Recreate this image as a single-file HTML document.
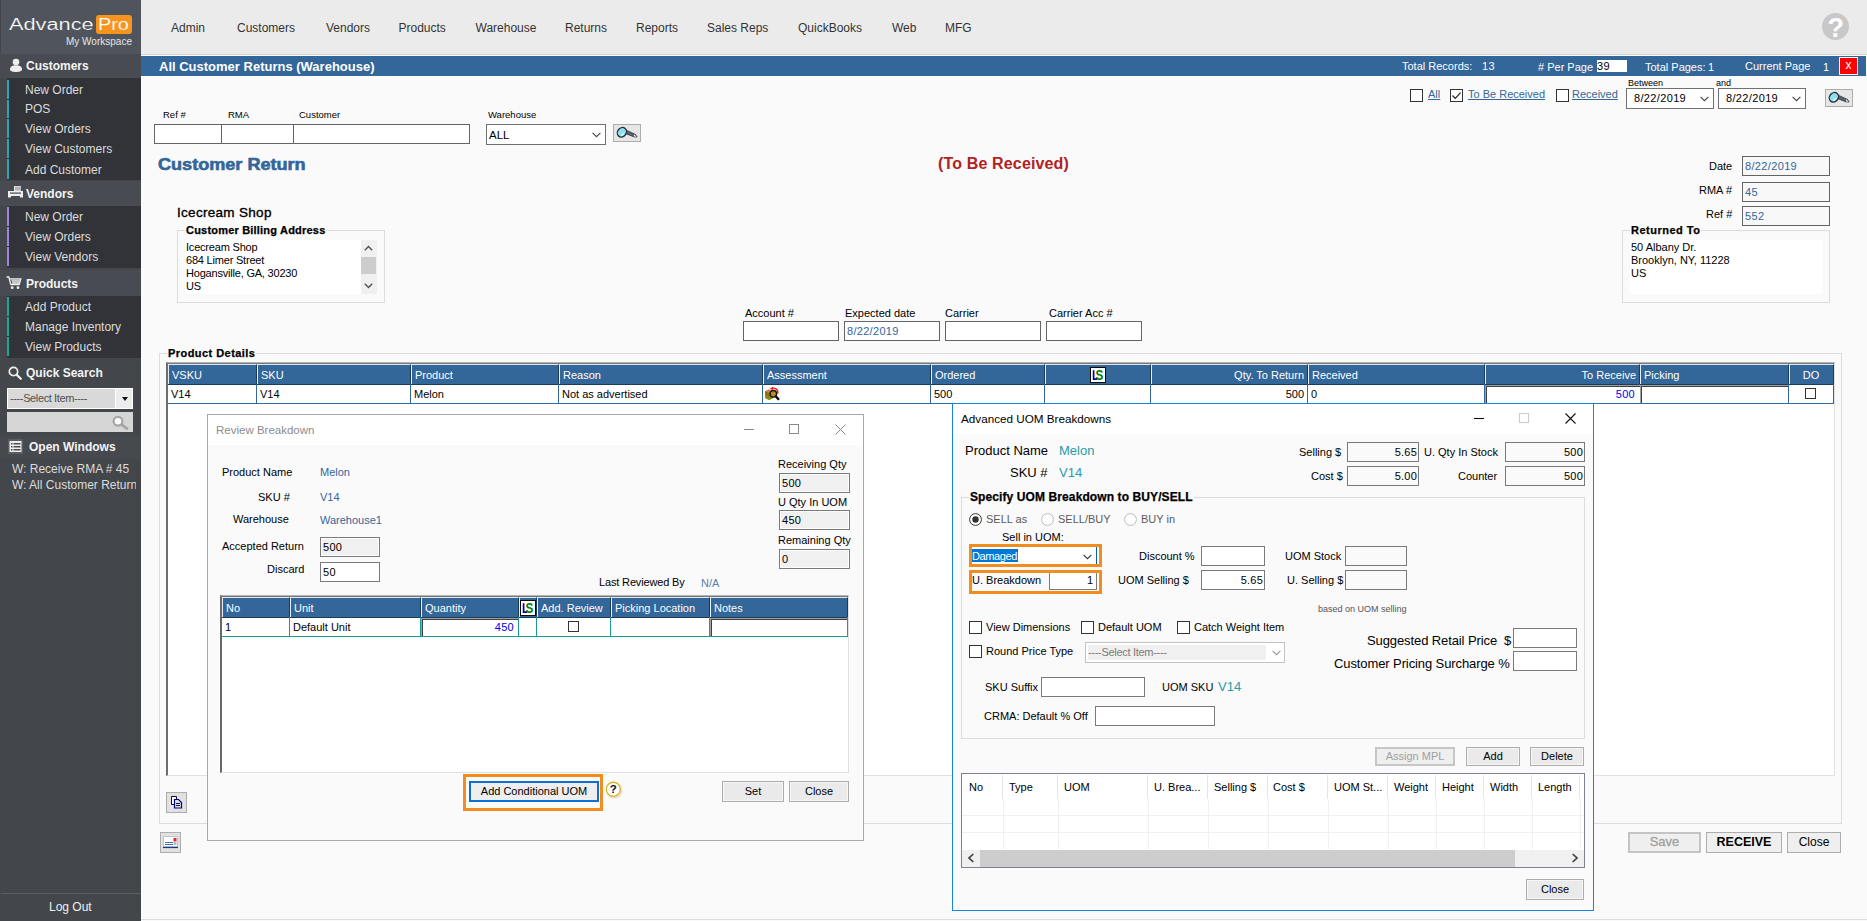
<!DOCTYPE html>
<html>
<head>
<meta charset="utf-8">
<title>AdvancePro</title>
<style>
*{box-sizing:border-box;margin:0;padding:0}
html,body{width:1867px;height:921px;overflow:hidden;background:#fafafa;font-family:"Liberation Sans",sans-serif;font-size:11px;color:#000}
.a{position:absolute;white-space:nowrap}
.t{position:absolute;white-space:nowrap;line-height:14px;height:14px}
.b{font-weight:bold}
.r{text-align:right}
.blue{color:#336699}
.teal{color:#2a9aa6}
/* sidebar */
#sb{position:absolute;left:0;top:0;width:141px;height:921px;background:#43464b}
#sb .logo{position:absolute;left:1px;top:0;width:140px;height:54px;background:#50555d}
#sb .hd{position:absolute;left:0;width:141px;background:#484b51;color:#f4f4f4;font-weight:bold;font-size:12px}
#sb .hd span{position:absolute;left:26px;line-height:14px}
#sb .grp{position:absolute;left:7px;width:134px;background:#313338}
#sb .it{position:absolute;left:0;width:134px;height:19px;color:#dcdcdc;font-size:12px;line-height:14px}
#sb .it i{position:absolute;left:0;top:0;width:2px;height:100%}
#sb .it span{position:absolute;left:18px;top:3px}
/* top */
#top{position:absolute;left:141px;top:0;width:1726px;height:55px;background:#ebebeb;border-bottom:1px solid #d4d4d4}
#top span{position:absolute;top:21px;font-size:12px;line-height:14px;color:#333}
#bar{position:absolute;left:141px;top:56px;width:1725px;height:20px;background:#336699;color:#fff}
#bar span{position:absolute;line-height:14px;font-size:11px}
/* inputs */
.in{position:absolute;background:#fff;border:1px solid #7a7a7a;font-size:11px;line-height:14px;white-space:nowrap;overflow:hidden}
.in.g{background:#f0f0f0}
.btn{position:absolute;background:#e1e1e1;border:1px solid #adadad;font-size:12px;text-align:center;white-space:nowrap}
.cb{position:absolute;width:13px;height:13px;background:#fff;border:1px solid #333}
.gb{position:absolute;border:1px solid #dcdcdc}
.gb>b{position:absolute;top:-8px;left:7px;background:#fafafa;padding:0 1px;font-size:11px;line-height:14px;white-space:nowrap;-webkit-text-stroke:.25px #000}
</style>
</head>
<body>
<!-- SIDEBAR -->
<div id="sb">
  <div class="logo">
    <span class="a" style="left:8px;top:15px;font-size:16px;line-height:20px;color:#fff;transform:scaleX(1.36);transform-origin:0 50%;-webkit-text-stroke:.2px #50555d">Advance</span>
    <div class="a" style="left:95px;top:15px;width:36px;height:19px;background:#f7941e;border-radius:3px"></div>
    <span class="a" style="left:97px;top:15px;font-size:16px;line-height:20px;color:#fff;transform:scaleX(1.24);transform-origin:0 50%;-webkit-text-stroke:.15px #f7941e">Pro</span>
    <span class="a" style="left:65px;top:36px;font-size:10px;line-height:12px;color:#e4e4e4">My Workspace</span>
  </div>
  <div class="hd" style="top:54px;height:24px"><span style="top:5px">Customers</span></div>
  <div class="hd" style="top:181px;height:25px"><span style="top:6px">Vendors</span></div>
  <div class="hd" style="top:270px;height:26px"><span style="top:7px">Products</span></div>
  <div class="hd" style="top:359px;height:27px;background:#43464b"><span style="top:7px">Quick Search</span></div>
  <div class="hd" style="top:436px;height:22px;background:#46494e"><span style="top:4px;left:29px">Open Windows</span></div>

  <!-- icons -->
  <svg class="a" style="left:9px;top:58px" width="14" height="15" viewBox="0 0 14 15"><circle cx="7" cy="4" r="3.3" fill="#eee"/><path d="M1 11.5C1 8.5 3.5 7.3 7 7.3s6 1.2 6 4.2c0 1.6-2.6 2.5-6 2.5s-6-.9-6-2.5z" fill="#eee"/></svg>
  <svg class="a" style="left:8px;top:186px" width="15" height="12" viewBox="0 0 15 12"><path d="M0 5h15v6.5h-3V10H3v1.5H0z M6 0h7v5H6z" fill="#eee"/><path d="M8 .5v4M10 .5v4M12 .5v4" stroke="#484b51" stroke-width=".7"/><rect x="2" y="6.5" width="11" height="1.2" fill="#484b51"/></svg>
  <svg class="a" style="left:6px;top:276px" width="17" height="14" viewBox="0 0 17 14"><path d="M0.5 1h2.3l2 7.5h8.4l1.6-5.7H4" fill="none" stroke="#eee" stroke-width="1.3"/><path d="M5.2 3.6h9l-1.3 4.6H6.4z" fill="#eee" opacity=".75"/><circle cx="6.2" cy="11.7" r="1.4" fill="#eee"/><circle cx="12" cy="11.7" r="1.4" fill="#eee"/></svg>
  <svg class="a" style="left:8px;top:366px" width="14" height="14" viewBox="0 0 14 14"><circle cx="5.5" cy="5.5" r="4.2" fill="none" stroke="#eee" stroke-width="1.7"/><path d="M8.6 8.6l4.2 4.2" stroke="#eee" stroke-width="2.2" stroke-linecap="round"/></svg>
  <svg class="a" style="left:8px;top:439px" width="15" height="15" viewBox="0 0 15 15"><rect x="0" y="0" width="15" height="15" fill="#5a5d63"/><rect x="1.5" y="2" width="12" height="11" fill="#eee"/><g fill="#484b51"><rect x="3" y="4" width="1.5" height="1.5"/><rect x="5.5" y="4" width="7" height="1.5"/><rect x="3" y="7" width="1.5" height="1.5"/><rect x="5.5" y="7" width="7" height="1.5"/><rect x="3" y="10" width="1.5" height="1.5"/><rect x="5.5" y="10" width="7" height="1.5"/></g></svg>
  <div class="grp" style="top:78px;height:102px">
    <div class="it" style="top:2px;height:19px"><i style="background:#2ba6b4"></i><span style="top:3px">New Order</span></div>
    <div class="it" style="top:22px;height:18px"><i style="background:#2ba6b4"></i><span style="top:2px">POS</span></div>
    <div class="it" style="top:41px;height:19px"><i style="background:#2ba6b4"></i><span style="top:3px">View Orders</span></div>
    <div class="it" style="top:61px;height:19px"><i style="background:#2ba6b4"></i><span style="top:3px">View Customers</span></div>
    <div class="it" style="top:81px;height:20px"><i style="background:#2ba6b4"></i><span style="top:4px">Add Customer</span></div>
  </div>
  <div class="grp" style="top:206px;height:62px">
    <div class="it" style="top:1px;height:19px"><i style="background:#9b84e0"></i><span style="top:3px">New Order</span></div>
    <div class="it" style="top:21px;height:19px"><i style="background:#9b84e0"></i><span style="top:3px">View Orders</span></div>
    <div class="it" style="top:41px;height:19px"><i style="background:#9b84e0"></i><span style="top:3px">View Vendors</span></div>
  </div>
  <div class="grp" style="top:296px;height:62px">
    <div class="it" style="top:1px;height:19px"><i style="background:#1fa594"></i><span style="top:3px">Add Product</span></div>
    <div class="it" style="top:21px;height:19px"><i style="background:#1fa594"></i><span style="top:3px">Manage Inventory</span></div>
    <div class="it" style="top:41px;height:19px"><i style="background:#1fa594"></i><span style="top:3px">View Products</span></div>
  </div>
  <!-- quick search -->
  <div class="a" style="left:7px;top:388px;width:126px;height:21px;background:#fff"></div><div class="a" style="left:116px;top:389px;width:16px;height:19px;background:#ececec"></div>
  <div class="a" style="left:8px;top:389px;width:107px;height:19px;background:#d9d9d9"></div>
  <span class="a" style="left:10px;top:391px;font-size:11px;line-height:14px;color:#505050;letter-spacing:-.38px">----Select Item----</span>
  <div class="a" style="left:122px;top:397px;border:3px solid transparent;border-top:4px solid #111;border-bottom:0"></div>
  <div class="a" style="left:7px;top:412px;width:126px;height:20px;background:#d6d6d6"></div>
  <svg class="a" style="left:112px;top:415px" width="17" height="15" viewBox="0 0 17 15"><circle cx="6" cy="6.3" r="4.4" fill="#fafafa" stroke="#a6a6a6" stroke-width="2.2"/><path d="M10 9.8l5 3.8" stroke="#a6a6a6" stroke-width="2.8" stroke-linecap="round"/></svg>
  <span class="a" style="left:12px;top:462px;font-size:12px;line-height:14px;color:#dcdcdc">W: Receive RMA # 45</span>
  <span class="a" style="left:12px;top:478px;font-size:12px;line-height:14px;color:#dcdcdc;width:124px;overflow:hidden">W: All Customer Returns</span>
  <div class="a" style="left:1px;top:893px;width:140px;height:1px;background:#5c5f64"></div>
  <span class="a" style="left:49px;top:900px;font-size:12px;line-height:14px;color:#f0f0f0">Log Out</span>
</div>
<!-- TOP MENU -->
<div id="top">
  <span style="left:30px">Admin</span><span style="left:96px">Customers</span><span style="left:185px">Vendors</span><span style="left:257.5px">Products</span><span style="left:334.5px">Warehouse</span><span style="left:424px">Returns</span><span style="left:495px">Reports</span><span style="left:566px">Sales Reps</span><span style="left:657px">QuickBooks</span><span style="left:751px">Web</span><span style="left:804px">MFG</span>
</div>
<svg class="a" style="left:1822px;top:13px" width="28" height="28" viewBox="0 0 28 28"><circle cx="13.5" cy="13.5" r="13.5" fill="#c8c8c8"/><text x="13.7" y="23.5" text-anchor="middle" font-family="Liberation Sans" font-weight="bold" font-size="27" fill="#fff">?</text></svg>
<div id="bar">
  <span class="b" style="left:18px;top:4px;font-size:13px">All Customer Returns (Warehouse)</span>
  <span style="left:1261px;top:3px;font-size:11px">Total Records:</span>
  <span style="left:1341px;top:3px;font-size:11px;letter-spacing:.4px">13</span>
  <span style="left:1397px;top:4px;font-size:11px"># Per Page</span>
  <div class="a" style="left:1456px;top:4px;width:30px;height:12px;background:#fff"></div>
  <span style="left:1456px;top:3px;font-size:11px;color:#000;letter-spacing:.4px">39</span>
  <span style="left:1504px;top:4px;font-size:11px">Total Pages:</span>
  <span style="left:1567px;top:4px;font-size:11px">1</span>
  <span style="left:1604px;top:3px;font-size:11px">Current Page</span>
  <span style="left:1682px;top:4px;font-size:11px">1</span>
  <div class="a" style="left:1698px;top:1px;width:19px;height:18px;background:#fe0000;border:1px solid #f4f4f4;color:#fff;font-size:12px;line-height:14px;text-align:center">x</div>
</div>

<!-- FILTER ROW -->
<span class="t" style="left:163px;top:108px;font-size:9.5px">Ref #</span>
<span class="t" style="left:228px;top:108px;font-size:9.5px">RMA</span>
<span class="t" style="left:299px;top:108px;font-size:9.5px">Customer</span>
<span class="t" style="left:488px;top:108px;font-size:9.5px">Warehouse</span>
<div class="in" style="left:154px;top:124px;width:68px;height:20px;border-color:#646464"></div>
<div class="in" style="left:221px;top:124px;width:73px;height:20px;border-color:#646464"></div>
<div class="in" style="left:293px;top:124px;width:177px;height:20px;border-color:#646464"></div>
<div class="in" style="left:486px;top:124px;width:120px;height:21px;border-color:#707070;padding:3px 0 0 2px;font-size:11.5px">ALL</div>
<svg class="a" style="left:592px;top:132px" width="9" height="6" viewBox="0 0 9 6"><path d="M.6.8l3.9 3.9L8.4.8" fill="none" stroke="#444" stroke-width="1.1"/></svg><svg class="a" style="left:613px;top:124px" width="28" height="18" viewBox="0 0 28 18"><rect x=".5" y=".5" width="27" height="17" fill="#e6e6e6" stroke="#adadad"/><path d="M13.2 6.2l9.3 4.2 1.6 2.6-3.2-.2-8.6-3.4z" fill="#5c646c" stroke="#2a3038" stroke-width=".8"/><path d="M21 10.2l2.6 2.6-2.4-.3z" fill="#fff"/><ellipse cx="8.9" cy="8.3" rx="4.3" ry="5" transform="rotate(40 8.9 8.3)" fill="#8edff0" stroke="#2a3038" stroke-width="1.4"/><path d="M8.2 11.6l3-2.2" stroke="#f4ffff" stroke-width="1.3"/></svg>
<div class="cb" style="left:1410px;top:89px"></div>
<span class="t" style="left:1428px;top:87px;font-size:11px;color:#336699;text-decoration:underline">All</span>
<div class="cb" style="left:1450px;top:89px"></div>
<svg class="a" style="left:1451px;top:90px" width="11" height="11" viewBox="0 0 11 11"><path d="M1.5 5.5l2.8 2.8L9.5 2.6" fill="none" stroke="#222" stroke-width="1.2"/></svg>
<span class="t" style="left:1468px;top:87px;font-size:11px;color:#336699;text-decoration:underline">To Be Received</span>
<div class="cb" style="left:1556px;top:89px"></div>
<span class="t" style="left:1572px;top:87px;font-size:11px;color:#336699;text-decoration:underline">Received</span>
<span class="t" style="left:1628px;top:76px;font-size:9px">Between</span>
<span class="t" style="left:1716px;top:76px;font-size:9px">and</span>
<div class="in" style="left:1626px;top:88px;width:88px;height:21px;border-color:#707070;padding:2px 0 0 7px;font-size:11px;letter-spacing:.35px">8/22/2019</div>
<div class="in" style="left:1718px;top:88px;width:88px;height:21px;border-color:#707070;padding:2px 0 0 7px;font-size:11px;letter-spacing:.35px">8/22/2019</div>
<svg class="a" style="left:1700px;top:96px" width="9" height="6" viewBox="0 0 9 6"><path d="M.6.8l3.9 3.9L8.4.8" fill="none" stroke="#444" stroke-width="1.1"/></svg><svg class="a" style="left:1792px;top:96px" width="9" height="6" viewBox="0 0 9 6"><path d="M.6.8l3.9 3.9L8.4.8" fill="none" stroke="#444" stroke-width="1.1"/></svg><svg class="a" style="left:1825px;top:89px" width="28" height="18" viewBox="0 0 28 18"><rect x=".5" y=".5" width="27" height="17" fill="#e6e6e6" stroke="#adadad"/><path d="M13.2 6.2l9.3 4.2 1.6 2.6-3.2-.2-8.6-3.4z" fill="#5c646c" stroke="#2a3038" stroke-width=".8"/><path d="M21 10.2l2.6 2.6-2.4-.3z" fill="#fff"/><ellipse cx="8.9" cy="8.3" rx="4.3" ry="5" transform="rotate(40 8.9 8.3)" fill="#8edff0" stroke="#2a3038" stroke-width="1.4"/><path d="M8.2 11.6l3-2.2" stroke="#f4ffff" stroke-width="1.3"/></svg>
<!-- HEADINGS -->
<span class="t b" style="left:158px;top:155px;font-size:16px;line-height:20px;height:20px;color:#336699;transform:scaleX(1.13);transform-origin:0 50%;-webkit-text-stroke:.6px #336699">Customer Return</span>
<span class="t b" style="left:938px;top:154px;font-size:16px;line-height:20px;height:20px;color:#b22222;letter-spacing:.15px">(To Be Received)</span>
<span class="t" style="left:177px;top:206px;font-size:13.5px;-webkit-text-stroke:.35px #000;letter-spacing:.3px">Icecream Shop</span>
<!-- billing -->
<div class="gb" style="left:177px;top:230px;width:208px;height:73px"><b style="letter-spacing:.2px">Customer Billing Address</b></div>
<div class="a" style="left:185px;top:240px;width:192px;height:54px;background:#fff"></div>
<div class="a" style="left:361px;top:240px;width:16px;height:54px;background:#f0f0f0"></div>
<div class="a" style="left:361px;top:257px;width:15px;height:17px;background:#cdcdcd"></div>
<svg class="a" style="left:364px;top:245px" width="9" height="6" viewBox="0 0 9 6"><path d="M.8 5.2l3.7-3.7 3.7 3.7" fill="none" stroke="#505050" stroke-width="1.4"/></svg>
<svg class="a" style="left:364px;top:283px" width="9" height="6" viewBox="0 0 9 6"><path d="M.8.8l3.7 3.7L8.2.8" fill="none" stroke="#505050" stroke-width="1.4"/></svg>
<span class="t" style="left:186px;top:240px;letter-spacing:-.2px">Icecream Shop</span>
<span class="t" style="left:186px;top:253px;letter-spacing:-.2px">684 Limer Street</span>
<span class="t" style="left:186px;top:266px;letter-spacing:-.2px">Hogansville, GA, 30230</span>
<span class="t" style="left:186px;top:279px;letter-spacing:-.2px">US</span>
<!-- right fields -->
<span class="t" style="left:1709px;top:159px;font-size:11px">Date</span>
<span class="t" style="left:1699px;top:183px;font-size:11px">RMA #</span>
<span class="t" style="left:1706px;top:207px;font-size:11px">Ref #</span>
<div class="in blue" style="left:1742px;top:156px;width:88px;height:20px;border-color:#646464;padding:2px 0 0 2px;font-size:11px;letter-spacing:.35px;background:#f8f8f8">8/22/2019</div>
<div class="in blue" style="left:1742px;top:182px;width:88px;height:20px;border-color:#646464;padding:2px 0 0 2px;font-size:11px;letter-spacing:.35px;background:#f8f8f8">45</div>
<div class="in blue" style="left:1742px;top:206px;width:88px;height:20px;border-color:#646464;padding:2px 0 0 2px;font-size:11px;letter-spacing:.35px;background:#f8f8f8">552</div>
<div class="gb" style="left:1622px;top:230px;width:208px;height:73px"><b style="left:7px;letter-spacing:.5px">Returned To</b></div>
<div class="a" style="left:1630px;top:240px;width:192px;height:54px;background:#fff"></div>
<span class="t" style="left:1631px;top:240px">50 Albany Dr.</span>
<span class="t" style="left:1631px;top:253px">Brooklyn, NY, 11228</span>
<span class="t" style="left:1631px;top:266px">US</span>
<!-- account row -->
<span class="t" style="left:745px;top:306px">Account #</span>
<span class="t" style="left:845px;top:306px">Expected date</span>
<span class="t" style="left:945px;top:306px">Carrier</span>
<span class="t" style="left:1049px;top:306px">Carrier Acc #</span>
<div class="in" style="left:743px;top:321px;width:96px;height:20px;border-color:#646464"></div>
<div class="in blue" style="left:844px;top:321px;width:96px;height:20px;border-color:#646464;padding:2px 0 0 2px;letter-spacing:.3px">8/22/2019</div>
<div class="in" style="left:945px;top:321px;width:96px;height:20px;border-color:#646464"></div>
<div class="in" style="left:1046px;top:321px;width:96px;height:20px;border-color:#646464"></div>
<!-- PRODUCT DETAILS -->
<div class="gb" style="left:159px;top:353px;width:1683px;height:471px"><b style="left:7px;letter-spacing:.45px">Product Details</b></div>
<div class="a" style="left:166px;top:362px;width:1669px;height:414px;background:#fff;border:1px solid #e0e0e0;border-left:2px solid #6e6e6e;border-top:1px solid #b4b4b4"></div><div class="a" style="left:166px;top:363px;width:1668px;height:1px;background:#787878"></div>
<div class="a" style="left:168px;top:364px;width:1666px;height:21px;background:#336699;border-bottom:1px solid #1c3a5a"></div>
<div class="a" style="left:168px;top:364px;width:89px;height:20px;border-right:1px solid #1c3a5a;border-left:1px solid #e8eef5;border-top:1px solid #dfe8f2;color:#fff;line-height:14px;padding:3px 4px 0 3px;overflow:hidden">VSKU</div>
<div class="a" style="left:168px;top:384px;width:89px;height:20px;border-right:1px solid #33669a;border-bottom:1px solid #336ca5;line-height:14px;padding:3px 4px 0 3px">V14</div>
<div class="a" style="left:257px;top:364px;width:154px;height:20px;border-right:1px solid #1c3a5a;border-left:1px solid #e8eef5;border-top:1px solid #dfe8f2;color:#fff;line-height:14px;padding:3px 4px 0 3px;overflow:hidden">SKU</div>
<div class="a" style="left:257px;top:384px;width:154px;height:20px;border-right:1px solid #33669a;border-bottom:1px solid #336ca5;line-height:14px;padding:3px 4px 0 3px">V14</div>
<div class="a" style="left:411px;top:364px;width:148px;height:20px;border-right:1px solid #1c3a5a;border-left:1px solid #e8eef5;border-top:1px solid #dfe8f2;color:#fff;line-height:14px;padding:3px 4px 0 3px;overflow:hidden">Product</div>
<div class="a" style="left:411px;top:384px;width:148px;height:20px;border-right:1px solid #33669a;border-bottom:1px solid #336ca5;line-height:14px;padding:3px 4px 0 3px">Melon</div>
<div class="a" style="left:559px;top:364px;width:204px;height:20px;border-right:1px solid #1c3a5a;border-left:1px solid #e8eef5;border-top:1px solid #dfe8f2;color:#fff;line-height:14px;padding:3px 4px 0 3px;overflow:hidden">Reason</div>
<div class="a" style="left:559px;top:384px;width:204px;height:20px;border-right:1px solid #33669a;border-bottom:1px solid #336ca5;line-height:14px;padding:3px 4px 0 3px">Not as advertised</div>
<div class="a" style="left:763px;top:364px;width:168px;height:20px;border-right:1px solid #1c3a5a;border-left:1px solid #e8eef5;border-top:1px solid #dfe8f2;color:#fff;line-height:14px;padding:3px 4px 0 3px;overflow:hidden">Assessment</div>
<div class="a" style="left:763px;top:384px;width:168px;height:20px;border-right:1px solid #33669a;border-bottom:1px solid #336ca5;line-height:14px;padding:3px 4px 0 3px"></div>
<div class="a" style="left:931px;top:364px;width:114px;height:20px;border-right:1px solid #1c3a5a;border-left:1px solid #e8eef5;border-top:1px solid #dfe8f2;color:#fff;line-height:14px;padding:3px 4px 0 3px;overflow:hidden">Ordered</div>
<div class="a" style="left:931px;top:384px;width:114px;height:20px;border-right:1px solid #33669a;border-bottom:1px solid #336ca5;line-height:14px;padding:3px 4px 0 3px">500</div>
<div class="a" style="left:1045px;top:364px;width:106px;height:20px;border-right:1px solid #1c3a5a;border-left:1px solid #e8eef5;border-top:1px solid #dfe8f2;color:#fff;line-height:14px;padding:3px 4px 0 3px;overflow:hidden"></div>
<div class="a" style="left:1045px;top:384px;width:106px;height:20px;border-right:1px solid #33669a;border-bottom:1px solid #336ca5;line-height:14px;padding:3px 4px 0 3px"></div>
<div class="a" style="left:1151px;top:364px;width:157px;height:20px;border-right:1px solid #1c3a5a;border-left:1px solid #e8eef5;border-top:1px solid #dfe8f2;color:#fff;line-height:14px;padding:3px 3px 0 3px;overflow:hidden;text-align:right">Qty. To Return</div>
<div class="a" style="left:1151px;top:384px;width:157px;height:20px;border-right:1px solid #33669a;border-bottom:1px solid #336ca5;line-height:14px;padding:3px 3px 0 3px;text-align:right">500</div>
<div class="a" style="left:1308px;top:364px;width:177px;height:20px;border-right:1px solid #1c3a5a;border-left:1px solid #e8eef5;border-top:1px solid #dfe8f2;color:#fff;line-height:14px;padding:3px 4px 0 3px;overflow:hidden">Received</div>
<div class="a" style="left:1308px;top:384px;width:177px;height:20px;border-right:1px solid #33669a;border-bottom:1px solid #336ca5;line-height:14px;padding:3px 4px 0 3px">0</div>
<div class="a" style="left:1485px;top:364px;width:155px;height:20px;border-right:1px solid #1c3a5a;border-left:1px solid #e8eef5;border-top:1px solid #dfe8f2;color:#fff;line-height:14px;padding:3px 3px 0 3px;overflow:hidden;text-align:right">To Receive</div>
<div class="a" style="left:1485px;top:384px;width:155px;height:20px;border-right:1px solid #33669a;border-bottom:1px solid #336ca5;line-height:14px;padding:3px 3px 0 3px;text-align:right"></div>
<div class="a" style="left:1640px;top:364px;width:149px;height:20px;border-right:1px solid #1c3a5a;border-left:1px solid #e8eef5;border-top:1px solid #dfe8f2;color:#fff;line-height:14px;padding:3px 4px 0 3px;overflow:hidden">Picking</div>
<div class="a" style="left:1640px;top:384px;width:149px;height:20px;border-right:1px solid #33669a;border-bottom:1px solid #336ca5;line-height:14px;padding:3px 4px 0 3px"></div>
<div class="a" style="left:1789px;top:364px;width:45px;height:20px;border-right:1px solid #1c3a5a;border-left:1px solid #e8eef5;border-top:1px solid #dfe8f2;color:#fff;line-height:14px;padding:3px 4px 0 3px;overflow:hidden;text-align:center">DO</div>
<div class="a" style="left:1789px;top:384px;width:45px;height:20px;border-right:1px solid #33669a;border-bottom:1px solid #336ca5;line-height:14px;padding:3px 4px 0 3px"></div>
<svg class="a" style="left:1090px;top:367px" width="16" height="16" viewBox="0 0 16 16"><rect x=".5" y=".5" width="15" height="15" fill="#fff" stroke="#0a0a0a"/><path d="M3.6 3.2v8.9h3.6" fill="none" stroke="#0000a8" stroke-width="1.7"/><text x="5.6" y="13" font-family="Liberation Sans" font-weight="bold" font-size="14" textLength="7.8" lengthAdjust="spacingAndGlyphs" fill="#007a00">S</text></svg>
<svg class="a" style="left:764px;top:386px" width="17" height="16" viewBox="0 0 17 16"><path d="M1 5.2L5 3.6l4.6 1.6V12L5 14.2 1 12z" fill="#868f0c"/><path d="M1 5.2L5 3.6l4.6 1.6L5 6.9z" fill="#c98a46"/><path d="M1 5.2v3l4 1.7V6.9z" fill="#a05a1c" opacity=".7"/><path d="M7.4 2.6C10.4 1.4 14.6 3 13.8 7.6" fill="none" stroke="#f11" stroke-width="1.3"/><path d="M5.8 2.7l3.1-1.9-.1 3.2z" fill="#f11"/><circle cx="9.3" cy="7.8" r="3.3" fill="#b98a28" stroke="#111" stroke-width="1.4"/><path d="M11.8 10.4l2.6 2.7" stroke="#111" stroke-width="2.3" stroke-linecap="round"/></svg>
<div class="a" style="left:1485px;top:385px;width:155px;height:18px;border-left:1px solid #a0a0a0;border-top:1px solid #a0a0a0;box-shadow:inset 1px 1px 0 #404040;background:#fff;color:#0000ee;line-height:14px;text-align:right;padding:1px 5px 0 0;letter-spacing:.3px">500</div>
<div class="a" style="left:1640px;top:385px;width:148px;height:18px;border-left:1px solid #a0a0a0;border-top:1px solid #a0a0a0;box-shadow:inset 1px 1px 0 #404040;background:#fff"></div>
<div class="cb" style="left:1805px;top:388px;width:11px;height:11px"></div>
<div class="a" style="left:166px;top:792px;width:21px;height:21px;background:#e1e1e1;border:1px solid #adadad"></div>
<svg class="a" style="left:170px;top:795px" width="13" height="14" viewBox="0 0 13 14"><path d="M1.5 1.5h5v3h-2v5h-3z" fill="#fff" stroke="#111"/><path d="M4.5 4.5h4l3 3v5.5h-7z" fill="#dde" stroke="#00008b" stroke-width="1.2"/><path d="M6 8.5h4M6 10.5h4" stroke="#111" stroke-width="1"/></svg>
<div class="a" style="left:160px;top:832px;width:21px;height:21px;background:#e1e1e1;border:1px solid #adadad"></div>
<svg class="a" style="left:163px;top:836px" width="15" height="13" viewBox="0 0 15 13"><rect x=".5" y=".5" width="14" height="10" fill="#fff" stroke="#b8c4d8"/><path d="M2 6.5h8M2 8.5h8" stroke="#4a6fa5" stroke-width="1"/><rect x="10.5" y="2" width="3" height="3" fill="#e22"/><rect x="10.5" y="5" width="3" height="4" fill="#bbb"/><path d="M0 11.5h15" stroke="#1a3a7a" stroke-width="1.2"/></svg>
<div class="btn" style="left:1628px;top:832px;width:73px;height:21px;border:2px solid #c4c4c4;background:#efefef;color:#a0a0a0;font-size:13px;line-height:16px;-webkit-text-stroke:.3px #a0a0a0">Save</div>
<div class="btn b" style="left:1706px;top:832px;width:76px;height:21px;font-size:12.5px;line-height:18px;background:#efefef">RECEIVE</div>
<div class="btn" style="left:1787px;top:832px;width:54px;height:21px;font-size:12px;line-height:18px;background:#efefef">Close</div>
<div class="a" style="left:141px;top:919px;width:1726px;height:1px;background:#dcdcdc"></div>
<!-- REVIEW BREAKDOWN -->
<div class="a" style="left:207px;top:414px;width:657px;height:427px;background:#fafafa;border:1px solid #a8a8a8"></div>
<div class="a" style="left:208px;top:415px;width:655px;height:30px;background:#fff"></div>
<span class="t" style="left:216px;top:423px;font-size:11.5px;color:#8c8c8c">Review Breakdown</span>
<svg class="a" style="left:743px;top:424px" width="104" height="12" viewBox="0 0 104 12"><g stroke="#8a8a8a" stroke-width="1" fill="none"><path d="M1 5.5h10"/><rect x="46.5" y=".5" width="9" height="9"/><path d="M92.5.5l10 10M102.5.5l-10 10"/></g></svg>
<span class="t" style="left:222px;top:465px">Product Name</span><span class="t blue" style="left:320px;top:465px">Melon</span>
<span class="t" style="left:258px;top:490px">SKU #</span><span class="t blue" style="left:320px;top:490px">V14</span>
<span class="t" style="left:233px;top:512px">Warehouse</span><span class="t blue" style="left:320px;top:513px">Warehouse1</span>
<span class="t" style="left:222px;top:539px">Accepted Return</span>
<div class="in g" style="left:320px;top:537px;width:60px;height:20px;padding:2px 0 0 2px;letter-spacing:.3px;box-shadow:inset 0 0 0 1px #fff">500</div>
<span class="t" style="left:267px;top:562px">Discard</span>
<div class="in" style="left:320px;top:562px;width:60px;height:20px;padding:2px 0 0 2px;letter-spacing:.3px">50</div>
<span class="t" style="left:778px;top:457px">Receiving Qty</span>
<div class="in g" style="left:779px;top:473px;width:71px;height:20px;padding:2px 0 0 2px;letter-spacing:.3px;box-shadow:inset 0 0 0 1px #fff">500</div>
<span class="t" style="left:778px;top:495px">U Qty In UOM</span>
<div class="in g" style="left:779px;top:510px;width:71px;height:20px;padding:2px 0 0 2px;letter-spacing:.3px;box-shadow:inset 0 0 0 1px #fff">450</div>
<span class="t" style="left:778px;top:533px">Remaining Qty</span>
<div class="in g" style="left:779px;top:549px;width:71px;height:20px;padding:2px 0 0 2px;letter-spacing:.3px;box-shadow:inset 0 0 0 1px #fff">0</div>
<span class="t" style="left:599px;top:575px;letter-spacing:-.15px">Last Reviewed By</span><span class="t" style="left:701px;top:576px;color:#5b7fa6">N/A</span>
<div class="a" style="left:220px;top:595px;width:629px;height:178px;background:#fff;border:1px solid #e0e0e0;border-left:2px solid #696969;border-top:1px solid #b4b4b4"></div><div class="a" style="left:220px;top:596px;width:628px;height:1px;background:#787878"></div>
<div class="a" style="left:222px;top:597px;width:626px;height:21px;background:#336699;border-bottom:1px solid #1c3a5a"></div>
<div class="a" style="left:222px;top:597px;width:68px;height:20px;border-right:1px solid #1c3a5a;border-left:1px solid #e8eef5;border-top:1px solid #dfe8f2;color:#fff;line-height:14px;padding:3px 4px 0 3px;overflow:hidden">No</div>
<div class="a" style="left:222px;top:617px;width:68px;height:20px;border-right:1px solid #1a9a9a;border-bottom:1px solid #1a9a9a;line-height:14px;padding:3px 4px 0 3px">1</div>
<div class="a" style="left:290px;top:597px;width:131px;height:20px;border-right:1px solid #1c3a5a;border-left:1px solid #e8eef5;border-top:1px solid #dfe8f2;color:#fff;line-height:14px;padding:3px 4px 0 3px;overflow:hidden">Unit</div>
<div class="a" style="left:290px;top:617px;width:131px;height:20px;border-right:1px solid #1a9a9a;border-bottom:1px solid #1a9a9a;line-height:14px;padding:3px 4px 0 3px">Default Unit</div>
<div class="a" style="left:421px;top:597px;width:98px;height:20px;border-right:1px solid #1c3a5a;border-left:1px solid #e8eef5;border-top:1px solid #dfe8f2;color:#fff;line-height:14px;padding:3px 4px 0 3px;overflow:hidden">Quantity</div>
<div class="a" style="left:421px;top:617px;width:98px;height:20px;border-right:1px solid #1a9a9a;border-bottom:1px solid #1a9a9a;line-height:14px;padding:3px 4px 0 3px"></div>
<div class="a" style="left:519px;top:597px;width:18px;height:20px;border-right:1px solid #1c3a5a;border-left:1px solid #e8eef5;border-top:1px solid #dfe8f2;color:#fff;line-height:14px;padding:3px 4px 0 3px;overflow:hidden"></div>
<div class="a" style="left:519px;top:617px;width:18px;height:20px;border-right:1px solid #1a9a9a;border-bottom:1px solid #1a9a9a;line-height:14px;padding:3px 4px 0 3px"></div>
<div class="a" style="left:537px;top:597px;width:74px;height:20px;border-right:1px solid #1c3a5a;border-left:1px solid #e8eef5;border-top:1px solid #dfe8f2;color:#fff;line-height:14px;padding:3px 4px 0 3px;overflow:hidden">Add. Review</div>
<div class="a" style="left:537px;top:617px;width:74px;height:20px;border-right:1px solid #1a9a9a;border-bottom:1px solid #1a9a9a;line-height:14px;padding:3px 4px 0 3px"></div>
<div class="a" style="left:611px;top:597px;width:99px;height:20px;border-right:1px solid #1c3a5a;border-left:1px solid #e8eef5;border-top:1px solid #dfe8f2;color:#fff;line-height:14px;padding:3px 4px 0 3px;overflow:hidden">Picking Location</div>
<div class="a" style="left:611px;top:617px;width:99px;height:20px;border-right:1px solid #1a9a9a;border-bottom:1px solid #1a9a9a;line-height:14px;padding:3px 4px 0 3px"></div>
<div class="a" style="left:710px;top:597px;width:138px;height:20px;border-right:1px solid #1c3a5a;border-left:1px solid #e8eef5;border-top:1px solid #dfe8f2;color:#fff;line-height:14px;padding:3px 4px 0 3px;overflow:hidden">Notes</div>
<div class="a" style="left:710px;top:617px;width:138px;height:20px;border-right:1px solid #1a9a9a;border-bottom:1px solid #1a9a9a;line-height:14px;padding:3px 4px 0 3px"></div>
<svg class="a" style="left:520px;top:600px" width="16" height="16" viewBox="0 0 16 16"><rect x=".5" y=".5" width="15" height="15" fill="#fff" stroke="#0a0a0a"/><path d="M3.6 3.2v8.9h3.6" fill="none" stroke="#0000a8" stroke-width="1.7"/><text x="5.6" y="13" font-family="Liberation Sans" font-weight="bold" font-size="14" textLength="7.8" lengthAdjust="spacingAndGlyphs" fill="#007a00">S</text></svg>
<div class="a" style="left:421px;top:618px;width:97px;height:18px;border-left:1px solid #a0a0a0;border-top:1px solid #a0a0a0;box-shadow:inset 1px 1px 0 #404040;background:#fff;color:#0000ee;line-height:14px;text-align:right;padding:1px 4px 0 0;letter-spacing:.3px">450</div>
<div class="a" style="left:710px;top:618px;width:137px;height:18px;border-left:1px solid #a0a0a0;border-top:1px solid #a0a0a0;box-shadow:inset 1px 1px 0 #404040;background:#fff"></div>
<div class="cb" style="left:568px;top:621px;width:11px;height:11px"></div>
<div class="a" style="left:463px;top:774px;width:140px;height:37px;border:3px solid #f28c1c"></div>
<div class="btn" style="left:469px;top:781px;width:130px;height:21px;border:2px solid #0b6fd8;background:#eee;font-size:11px;line-height:16px">Add Conditional UOM</div>
<svg class="a" style="left:604px;top:780px" width="22" height="22" viewBox="0 0 22 22"><circle cx="10.6" cy="10.8" r="8" fill="#e6dcc0" opacity=".8"/><circle cx="9.3" cy="9.3" r="7" fill="#fff" stroke="#d9b62e" stroke-width="1.4"/><text x="9.3" y="13.4" text-anchor="middle" font-family="Liberation Sans" font-weight="bold" font-size="11.5" fill="#111">?</text></svg>
<div class="btn" style="left:722px;top:781px;width:62px;height:21px;background:#eaeaea;box-shadow:inset 0 0 0 1px #f6f6f6;font-size:11px;line-height:18px">Set</div>
<div class="btn" style="left:789px;top:781px;width:60px;height:21px;background:#eaeaea;box-shadow:inset 0 0 0 1px #f6f6f6;font-size:11px;line-height:18px">Close</div>
<!-- ADVANCED UOM -->
<div class="a" style="left:952px;top:403px;width:642px;height:508px;background:#fafafa;border:1px solid #1883d7"></div>
<div class="a" style="left:953px;top:404px;width:640px;height:30px;background:#fff"></div>
<span class="t" style="left:961px;top:412px;font-size:11.7px">Advanced UOM Breakdowns</span>
<svg class="a" style="left:1473px;top:413px" width="104" height="12" viewBox="0 0 104 12"><g stroke-width="1.1" fill="none"><path d="M1 5.5h10" stroke="#111"/><rect x="46.5" y=".5" width="9" height="9" stroke="#ccc"/><path d="M92.5.5l10 10M102.5.5l-10 10" stroke="#111"/></g></svg>
<span class="t" style="left:965px;top:443px;font-size:13px;line-height:16px">Product Name</span><span class="t teal" style="left:1059px;top:443px;font-size:13px;line-height:16px">Melon</span>
<span class="t" style="left:1010px;top:465px;font-size:13px;line-height:16px">SKU #</span><span class="t teal" style="left:1059px;top:465px;font-size:13px;line-height:16px">V14</span>
<span class="t" style="left:1299px;top:445px">Selling $</span>
<span class="t" style="left:1311px;top:469px">Cost $</span>
<span class="t" style="left:1424px;top:445px">U. Qty In Stock</span>
<span class="t" style="left:1458px;top:469px">Counter</span>
<div class="in r" style="left:1347px;top:442px;width:72px;height:20px;padding:2px 1px 0 0;letter-spacing:.2px;background:#fafafa">5.65</div>
<div class="in r" style="left:1347px;top:466px;width:72px;height:20px;padding:2px 1px 0 0;letter-spacing:.2px;background:#fafafa">5.00</div>
<div class="in r" style="left:1505px;top:442px;width:80px;height:20px;padding:2px 1px 0 0;letter-spacing:.2px;background:#fafafa">500</div>
<div class="in r" style="left:1505px;top:466px;width:80px;height:20px;padding:2px 1px 0 0;letter-spacing:.2px;background:#fafafa">500</div>
<div class="gb" style="left:961px;top:497px;width:624px;height:242px"><b style="left:7px;font-size:12px;letter-spacing:.1px">Specify UOM Breakdown to BUY/SELL</b></div>
<svg class="a" style="left:969px;top:513px" width="13" height="13" viewBox="0 0 13 13"><circle cx="6.5" cy="6.5" r="5.9" fill="#fff" stroke="#333" stroke-width="1"/><circle cx="6.5" cy="6.5" r="3.2" fill="#333"/></svg>
<svg class="a" style="left:1041px;top:513px" width="13" height="13" viewBox="0 0 13 13"><circle cx="6.5" cy="6.5" r="5.9" fill="#fff" stroke="#bcbcbc" stroke-width="1"/></svg>
<svg class="a" style="left:1124px;top:513px" width="13" height="13" viewBox="0 0 13 13"><circle cx="6.5" cy="6.5" r="5.9" fill="#fff" stroke="#bcbcbc" stroke-width="1"/></svg>
<span class="t" style="left:986px;top:512px;color:#5a5a5a">SELL as</span>
<span class="t" style="left:1058px;top:512px;color:#5a5a5a">SELL/BUY</span>
<span class="t" style="left:1141px;top:512px;color:#5a5a5a">BUY in</span>
<span class="t" style="left:1002px;top:530px">Sell in UOM:</span>
<div class="a" style="left:969px;top:544px;width:133px;height:23px;border:3px solid #f28c1c;z-index:2"></div>
<div class="a" style="left:971px;top:546px;width:126px;height:19px;background:#fff;border-right:1px solid #0b5cb0"></div>
<div class="a" style="left:972px;top:549px;width:46px;height:13px;background:#0078d7"></div>
<span class="t" style="left:972px;top:549px;color:#fff;letter-spacing:-.4px">Damaged</span>
<svg class="a" style="left:1083px;top:554px" width="9" height="6" viewBox="0 0 9 6"><path d="M.6.8l3.9 3.9L8.4.8" fill="none" stroke="#333" stroke-width="1.1"/></svg>
<div class="a" style="left:969px;top:570px;width:133px;height:24px;border:3px solid #f28c1c;z-index:2"></div>
<span class="t" style="left:972px;top:573px">U. Breakdown</span>
<div class="in r" style="left:1049px;top:572px;width:48px;height:18px;padding:0 3px 0 0;">1</div>
<span class="t" style="left:1139px;top:549px">Discount %</span>
<span class="t" style="left:1118px;top:573px">UOM Selling $</span>
<span class="t" style="left:1285px;top:549px">UOM Stock</span>
<span class="t" style="left:1287px;top:573px">U. Selling $</span>
<div class="in r" style="left:1201px;top:546px;width:64px;height:20px;padding:2px 1px 0 0;letter-spacing:.2px;"></div>
<div class="in r" style="left:1201px;top:570px;width:64px;height:20px;padding:2px 1px 0 0;letter-spacing:.2px;">5.65</div>
<div class="in r" style="left:1345px;top:546px;width:62px;height:20px;padding:2px 1px 0 0;letter-spacing:.2px;background:#fafafa"></div>
<div class="in r" style="left:1345px;top:570px;width:62px;height:20px;padding:2px 1px 0 0;letter-spacing:.2px;background:#fafafa"></div>
<span class="t" style="left:1318px;top:602px;font-size:9px;color:#555">based on UOM selling</span>
<div class="cb" style="left:969px;top:621px"></div><span class="t" style="left:986px;top:620px">View Dimensions</span>
<div class="cb" style="left:1081px;top:621px"></div><span class="t" style="left:1098px;top:620px">Default UOM</span>
<div class="cb" style="left:1177px;top:621px"></div><span class="t" style="left:1194px;top:620px">Catch Weight Item</span>
<div class="cb" style="left:969px;top:645px"></div><span class="t" style="left:986px;top:644px">Round Price Type</span>
<div class="a" style="left:1085px;top:642px;width:200px;height:21px;background:#fff;border:1px solid #c3c3c3"></div>
<div class="a" style="left:1088px;top:645px;width:178px;height:15px;background:#f0f0f0"></div>
<span class="t" style="left:1088px;top:645px;color:#7a7a7a;letter-spacing:-.3px">----Select Item----</span>
<svg class="a" style="left:1272px;top:650px" width="9" height="6" viewBox="0 0 9 6"><path d="M.6.8l3.9 3.9L8.4.8" fill="none" stroke="#999" stroke-width="1.1"/></svg>
<span class="t" style="left:1367px;top:633px;font-size:13px;line-height:16px;letter-spacing:-.1px">Suggested Retail Price&nbsp; $</span>
<span class="t" style="left:1334px;top:656px;font-size:13px;line-height:16px;letter-spacing:-.1px">Customer Pricing Surcharge %</span>
<div class="in r" style="left:1513px;top:628px;width:64px;height:20px;padding:2px 1px 0 0;letter-spacing:.2px;"></div>
<div class="in r" style="left:1513px;top:651px;width:64px;height:20px;padding:2px 1px 0 0;letter-spacing:.2px;"></div>
<span class="t" style="left:985px;top:680px">SKU Suffix</span>
<div class="in r" style="left:1041px;top:677px;width:104px;height:20px;padding:2px 1px 0 0;letter-spacing:.2px;"></div>
<span class="t" style="left:1162px;top:680px">UOM SKU</span><span class="t teal" style="left:1218px;top:679px;font-size:13px;line-height:16px">V14</span>
<span class="t" style="left:984px;top:709px">CRMA: Default % Off</span>
<div class="in r" style="left:1095px;top:706px;width:120px;height:20px;padding:2px 1px 0 0;letter-spacing:.2px;"></div>
<div class="btn" style="left:1375px;top:747px;width:80px;height:19px;border:2px solid #c6c6c6;background:#efefef;color:#a0a0a0;font-size:11px;line-height:14px">Assign MPL</div>
<div class="btn" style="left:1466px;top:747px;width:54px;height:19px;background:#eaeaea;box-shadow:inset 0 0 0 1px #f6f6f6;font-size:11px;line-height:16px">Add</div>
<div class="btn" style="left:1530px;top:747px;width:54px;height:19px;background:#eaeaea;box-shadow:inset 0 0 0 1px #f6f6f6;font-size:11px;line-height:16px">Delete</div>
<div class="a" style="left:961px;top:773px;width:624px;height:95px;background:#fff;border:1px solid #7d838c"></div>
<span class="t" style="left:969px;top:780px">No</span><span class="t" style="left:1009px;top:780px">Type</span><span class="t" style="left:1064px;top:780px">UOM</span><span class="t" style="left:1154px;top:780px">U. Brea...</span><span class="t" style="left:1214px;top:780px">Selling $</span><span class="t" style="left:1273px;top:780px">Cost $</span><span class="t" style="left:1334px;top:780px">UOM St...</span><span class="t" style="left:1394px;top:780px">Weight</span><span class="t" style="left:1442px;top:780px">Height</span><span class="t" style="left:1490px;top:780px">Width</span><span class="t" style="left:1538px;top:780px">Length</span>
<div class="a" style="left:1002px;top:775px;width:1px;height:24px;background:#e5e5e5"></div><div class="a" style="left:1003px;top:799px;width:1px;height:50px;background:#f0f0f0"></div><div class="a" style="left:1057px;top:775px;width:1px;height:24px;background:#e5e5e5"></div><div class="a" style="left:1058px;top:799px;width:1px;height:50px;background:#f0f0f0"></div><div class="a" style="left:1147px;top:775px;width:1px;height:24px;background:#e5e5e5"></div><div class="a" style="left:1148px;top:799px;width:1px;height:50px;background:#f0f0f0"></div><div class="a" style="left:1207px;top:775px;width:1px;height:24px;background:#e5e5e5"></div><div class="a" style="left:1208px;top:799px;width:1px;height:50px;background:#f0f0f0"></div><div class="a" style="left:1267px;top:775px;width:1px;height:24px;background:#e5e5e5"></div><div class="a" style="left:1268px;top:799px;width:1px;height:50px;background:#f0f0f0"></div><div class="a" style="left:1327px;top:775px;width:1px;height:24px;background:#e5e5e5"></div><div class="a" style="left:1328px;top:799px;width:1px;height:50px;background:#f0f0f0"></div><div class="a" style="left:1387px;top:775px;width:1px;height:24px;background:#e5e5e5"></div><div class="a" style="left:1388px;top:799px;width:1px;height:50px;background:#f0f0f0"></div><div class="a" style="left:1435px;top:775px;width:1px;height:24px;background:#e5e5e5"></div><div class="a" style="left:1436px;top:799px;width:1px;height:50px;background:#f0f0f0"></div><div class="a" style="left:1483px;top:775px;width:1px;height:24px;background:#e5e5e5"></div><div class="a" style="left:1484px;top:799px;width:1px;height:50px;background:#f0f0f0"></div><div class="a" style="left:1531px;top:775px;width:1px;height:24px;background:#e5e5e5"></div><div class="a" style="left:1532px;top:799px;width:1px;height:50px;background:#f0f0f0"></div><div class="a" style="left:1579px;top:775px;width:1px;height:24px;background:#e5e5e5"></div><div class="a" style="left:1580px;top:799px;width:1px;height:50px;background:#f0f0f0"></div>
<div class="a" style="left:962px;top:815px;width:622px;height:1px;background:#f0f0f0"></div><div class="a" style="left:962px;top:832px;width:622px;height:1px;background:#f0f0f0"></div>
<div class="a" style="left:962px;top:850px;width:622px;height:17px;background:#f0f0f0"></div>
<div class="a" style="left:980px;top:850px;width:535px;height:17px;background:#cdcdcd"></div>
<svg class="a" style="left:967px;top:853px" width="8" height="10" viewBox="0 0 8 10"><path d="M6.3 1L2 5l4.3 4" fill="none" stroke="#404040" stroke-width="1.7"/></svg>
<svg class="a" style="left:1571px;top:853px" width="8" height="10" viewBox="0 0 8 10"><path d="M1.7 1L6 5 1.7 9" fill="none" stroke="#404040" stroke-width="1.7"/></svg>
<div class="btn" style="left:1526px;top:879px;width:58px;height:21px;background:#eaeaea;box-shadow:inset 0 0 0 1px #f6f6f6;font-size:11px;line-height:18px">Close</div>
<!--MAIN4-->
</body>
</html>
